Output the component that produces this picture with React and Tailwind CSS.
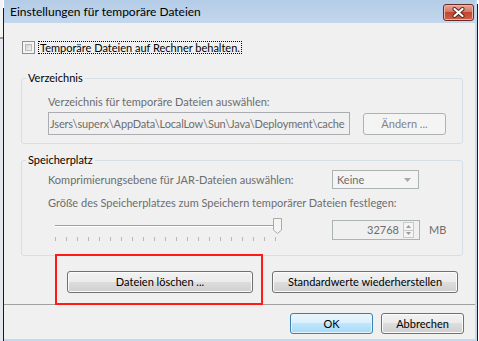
// Java "Einstellungen für temporäre Dateien" dialog, Windows 7 style.

const FONT = { fontFamily: 'Lato, "Noto Sans", sans-serif' };

function Button({ children, className = '', variant = 'normal' }) {
  const tone =
    variant === 'default'
      ? 'border-[#3c7fb1] bg-[linear-gradient(#eaf6fd,#d9f0fc_50%,#bee6fd_50%,#a7d9f5)] shadow-[inset_0_0_0_1px_#e6f4fc] text-black'
      : variant === 'disabled'
        ? 'border-[#adb2b5] bg-[#f4f4f4] text-[#838383]'
        : 'border-[#707070] bg-[linear-gradient(#f2f2f2,#ebebeb_50%,#dddddd_50%,#cfcfcf)] shadow-[inset_0_0_0_1px_#fbfbfb] text-black';
  return (
    <div className={`flex items-center justify-center whitespace-nowrap rounded-[3px] border text-[11px] ${tone} ${className}`}>
      {children}
    </div>
  );
}

function Checkbox() {
  return (
    <div className="h-[13px] w-[13px] shrink-0 border border-[#8e8f8f] bg-[#f4f4f4] p-[2px]">
      <div className="h-full w-full border border-[#b9bcc0] bg-[linear-gradient(135deg,#cbcfd5,#f6f6f6)]" />
    </div>
  );
}

function Slider() {
  const ticks = Array.from({ length: 21 }, (_, i) => i);
  return (
    <div className="relative ml-[7px] h-[24px] w-[228px]">
      <div className="absolute left-0 top-[8px] h-[2px] w-[221px] border-t border-[#a0a0a0] bg-white" />
      <svg className="absolute left-[217px] top-0" width="11" height="18" viewBox="0 0 11 18">
        <path d="M1.5 1.5 H9.5 V13 L5.5 16.5 L1.5 13 Z" fill="#f4f4f4" stroke="#a9a9a9" />
      </svg>
      <div className="absolute left-0 top-[20px] flex gap-[10px]">
        {ticks.map((t) => (
          <div key={t} className="h-[4px] w-px bg-[#b8b8b8]" />
        ))}
      </div>
    </div>
  );
}

function Spinner() {
  return (
    <div className="flex h-[20px] w-[88px] border border-[#adb2b5] bg-[#f0f0f0]">
      <div className="flex flex-1 items-center justify-end pr-[4px] text-[#6d6d6d]">32768</div>
      <div className="my-px mr-[5px] flex w-[11px] flex-col">
        <div className="flex flex-1 items-center justify-center border border-[#c9c9c9] bg-[#f4f4f4]">
          <svg width="5" height="3" viewBox="0 0 5 3"><path d="M0 3 L2.5 0 L5 3 Z" fill="#9a9a9a" /></svg>
        </div>
        <div className="flex flex-1 items-center justify-center border border-t-0 border-[#c9c9c9] bg-[#f4f4f4]">
          <svg width="5" height="3" viewBox="0 0 5 3"><path d="M0 0 L2.5 3 L5 0 Z" fill="#9a9a9a" /></svg>
        </div>
      </div>
    </div>
  );
}

export default function App() {
  return (
    <div className="flex h-[341px] w-[479px] overflow-hidden bg-white" style={FONT}>
      {/* desktop strip + frame edge */}
      <div className="flex w-[3px] flex-col">
        <div className="h-[37px] bg-[#f4f4f4]" />
        <div className="h-[2px] bg-[#9a9a9a]" />
        <div className="flex-1 bg-[#e4e8ee]" />
      </div>
      <div className="mt-[8px] w-px bg-[#1b1b1b]" />

      <div className="flex w-[471px] flex-col">
        {/* title bar */}
        <div className="relative flex h-[23px] items-center bg-[linear-gradient(#b4cce6,#c3d7ed)] pl-[6px]">
          <span className="whitespace-nowrap text-[12px] text-black">Einstellungen für temporäre Dateien</span>
          <div className="absolute left-[439px] top-[4px] flex h-[17px] w-[31px] items-center justify-center rounded-[3px] border border-[#6e2a22] bg-[linear-gradient(#e7a597,#d27a68_45%,#c24530_50%,#d0604a)] shadow-[inset_0_0_0_1px_#eeb4a8]">
            <svg width="13" height="11" viewBox="0 0 13 11">
              <path d="M2.5 2 L10.5 9 M10.5 2 L2.5 9" stroke="#4b2620" strokeWidth="4" strokeLinecap="round" />
              <path d="M2.5 2 L10.5 9 M10.5 2 L2.5 9" stroke="#ffffff" strokeWidth="2.2" strokeLinecap="round" />
            </svg>
          </div>
        </div>

        {/* content */}
        <div className="relative flex h-[316px] flex-col whitespace-nowrap bg-[#f0f0f0] text-[11px] leading-4">
          <div className="ml-[18px] mt-[18px] flex h-[13px] items-center">
            <Checkbox />
            <span className="ml-[3px] border border-dotted border-black px-px leading-[11px] text-black">
              Temporäre Dateien auf Rechner behalten.
            </span>
          </div>

          <fieldset className="ml-[17px] mt-[16px] w-[442px] rounded-[3px] border border-[#d5dfe5] pb-[8px] pl-[26px]">
            <legend className="-ml-[22px] px-[2px] text-black">Verzeichnis</legend>
            <div className="mt-[8px] text-[#6d6d6d]">Verzeichnis für temporäre Dateien auswählen:</div>
            <div className="mt-[2px] flex items-center">
              <div className="flex h-[23px] w-[302px] items-center overflow-hidden border border-[#abadb3] bg-[#f0f0f0] pl-[1px] tracking-[-0.15px] text-[#6d6d6d]">
                Jsers\superx\AppData\LocalLow\Sun\Java\Deployment\cache
              </div>
              <Button variant="disabled" className="ml-[13px] h-[22px] w-[83px]">Ändern ...</Button>
            </div>
          </fieldset>

          <fieldset className="ml-[17px] mt-[8px] w-[442px] rounded-[3px] border border-[#d5dfe5] pb-[14px] pl-[26px]">
            <legend className="-ml-[22px] px-[2px] text-black">Speicherplatz</legend>
            <div className="mt-[2px] flex h-[19px] items-center">
              <div className="w-[284px] text-[#6d6d6d]">Komprimierungsebene für JAR-Dateien auswählen:</div>
              <div className="flex h-[19px] w-[87px] items-center justify-between border border-[#adb2b5] bg-[#f4f4f4] pl-[4px] pr-[7px] text-[#6d6d6d]">
                Keine
                <svg width="7" height="4" viewBox="0 0 7 4"><path d="M0 0 L3.5 4 L7 0 Z" fill="#a9a9a9" /></svg>
              </div>
            </div>
            <div className="mt-[6px] text-[#6d6d6d]">Größe des Speicherplatzes zum Speichern temporärer Dateien festlegen:</div>
            <div className="mt-[6px] flex h-[24px] items-start">
              <div className="w-[284px]">
                <Slider />
              </div>
              <div className="mt-[3px]">
                <Spinner />
              </div>
              <div className="ml-[9px] mt-[5px] text-[#6d6d6d]">MB</div>
            </div>
          </fieldset>

          <div className="ml-[63px] mt-[15px] flex gap-[19px]">
            <Button className="h-[22px] w-[186px]">Dateien löschen ...</Button>
            <Button className="h-[22px] w-[186px]">Standardwerte wiederherstellen</Button>
          </div>

          <div className="mt-[11px] h-px bg-[#a0a0a0]" />

          <div className="mr-[11px] mt-[8px] flex justify-end gap-[8px]">
            <Button variant="default" className="h-[21px] w-[83px]">OK</Button>
            <Button className="h-[21px] w-[83px]">Abbrechen</Button>
          </div>

          {/* annotation */}
          <div className="absolute left-[51px] top-[231px] h-[51px] w-[208px] border-2 border-[#ff1a1a]" />
        </div>

        <div className="h-[2px] bg-[#c5d9ee]" />
      </div>

      <div className="w-[2px] bg-[#c5d9ee]" />
      <div className="mt-[4px] w-px bg-[#1b1b1b]" />
      <div className="w-px bg-white" />
    </div>
  );
}
